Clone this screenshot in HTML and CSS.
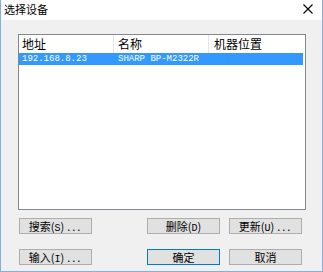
FILE: index.html
```html
<!DOCTYPE html>
<html lang="zh">
<head>
    <meta charset="UTF-8">
    <title>选择设备</title>
    <link rel="stylesheet" href="styles.css">
</head>
<body>
    <div class="window">
        <div class="titlebar">
            <span class="title">选择设备</span>
            <svg class="close" width="10" height="10" viewBox="0 0 10 10">
                <path d="M0.5 0.5 L9.5 9.5 M9.5 0.5 L0.5 9.5" stroke="#000" stroke-width="1.1"/>
            </svg>
        </div>
        <div class="content">
            <div class="list">
                <div class="list-head">
                    <div class="col c1">地址</div>
                    <div class="col c2">名称</div>
                    <div class="col c3">机器位置</div>
                </div>
                <div class="list-row selected">
                    <div class="col c1 mono">192.168.8.23</div>
                    <div class="col c2 mono">SHARP BP-M2322R</div>
                    <div class="col c3"></div>
                </div>
            </div>
            <div class="buttons">
                <button class="btn">搜索(<span class="mono">S</span>)<span class="dots">...</span></button>
                <button class="btn push">删除(<span class="mono">D</span>)</button>
                <button class="btn">更新(<span class="mono">U</span>)<span class="dots">...</span></button>
            </div>
            <div class="buttons second">
                <button class="btn">输入(<span class="mono">I</span>)<span class="dots">...</span></button>
                <button class="btn push default">确定</button>
                <button class="btn">取消</button>
            </div>
        </div>
    </div>
</body>
</html>
```

FILE: styles.css
```css
body {
    margin: 0;
    padding: 0;
    font-family: "Noto Sans CJK SC", "DejaVu Sans", sans-serif;
    font-size: 12px;
    color: #000;
}
.window {
    width: 323px;
    height: 272px;
    box-sizing: border-box;
    border: 1px solid #7fb2e3;
    border-top: none;
    background-color: #f0f0f0;
}
.titlebar {
    height: 20px;
    background-color: #fff;
    display: flex;
    align-items: center;
    justify-content: space-between;
    padding: 0 9px 0 3px;
}
.title {
    font-size: 11px;
    line-height: 20px;
    margin-top: -2px;
}
.close {
    margin-top: -2px;
}
.content {
    padding: 14px 16px 0 17px;
}
.list {
    height: 176px;
    box-sizing: border-box;
    border: 1px solid #828790;
    background-color: #fff;
    padding-right: 2px;
}
.list-head, .list-row {
    display: flex;
}
.list-head {
    height: 18px;
    line-height: 17px;
}
.list-head .col {
    border-right: 1px solid #e5e5e5;
}
.list-row {
    height: 12px;
    line-height: 12px;
    font-size: 9px;
}
.list-row.selected {
    background-color: #3399ff;
    color: #fff;
}
.col {
    box-sizing: border-box;
    padding-left: 3px;
    white-space: nowrap;
    overflow: hidden;
}
.c1 { width: 95px; }
.c2 { width: 95px; padding-left: 4px; }
.c3 { width: 94px; padding-left: 5px; }
.list-head .c3 { border-right: none; }
.mono {
    font-family: "Liberation Mono", monospace;
}
.buttons {
    display: flex;
    margin-top: 8px;
    padding: 0 4px 0 1px;
}
.buttons.second {
    margin-top: 15px;
}
.btn {
    width: 73px;
    height: 16px;
    margin: 0 9px 0 0;
    padding: 0;
    border: 1px solid #adadad;
    background-color: #e1e1e1;
    font-family: "Noto Sans CJK SC", "DejaVu Sans", sans-serif;
    font-size: 11px;
    line-height: 14px;
    color: #000;
}
.btn:last-child {
    margin-right: 0;
}
.btn .mono {
    font-size: 10px;
}
.dots {
    letter-spacing: 2px;
    margin-left: 3px;
}
.btn.push {
    margin-left: auto;
}
.btn.default {
    border-color: #0078d7;
}
```
